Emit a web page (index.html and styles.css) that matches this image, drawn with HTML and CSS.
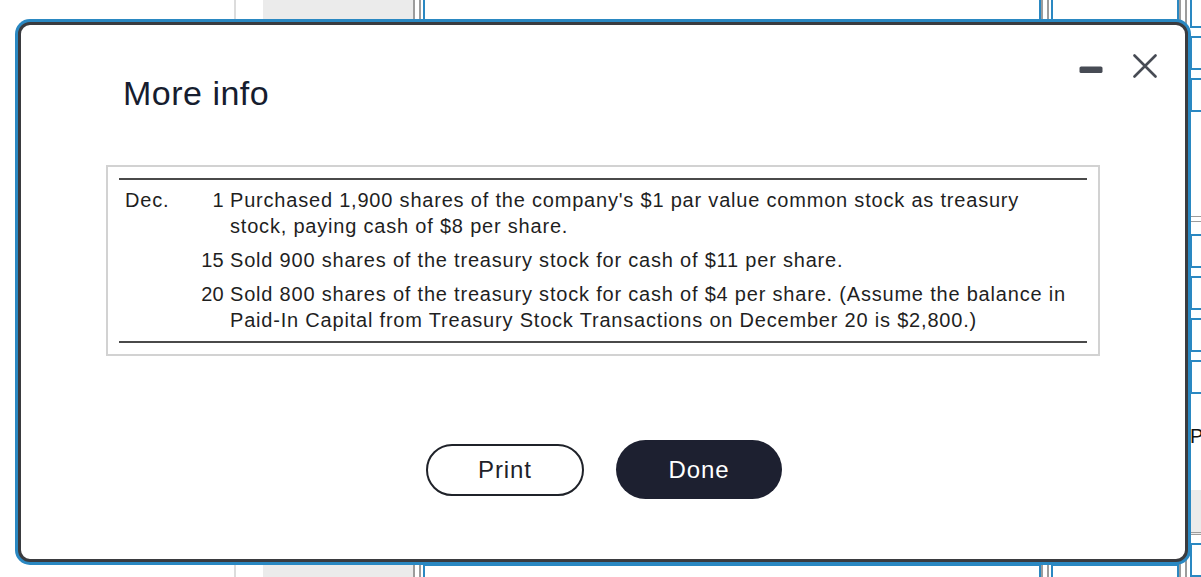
FILE: index.html
```html
<!DOCTYPE html>
<html lang="en">
<head>
<meta charset="utf-8">
<title>More info</title>
<link rel="stylesheet" href="styles.css">
</head>
<body>
<div class="page">
  <div class="col col-a"></div>
  <div class="col col-b"></div>
  <div class="col col-c"></div>
  <div class="col sep"></div>
  <div class="col panel panel-wide"><div class="panel-low"></div></div>
  <div class="col sep"></div>
  <div class="col panel panel-mid"><div class="panel-low"></div></div>
  <div class="col sep"></div>
  <div class="col side">
    <div class="side-box side-box-top"></div>
    <div class="side-box"></div>
    <div class="side-box"></div>
    <div class="side-rule"></div>
    <div class="side-box"></div>
    <div class="side-box"></div>
    <div class="side-box"></div>
    <div class="side-box"></div>
    <div class="side-letter">P</div>
    <div class="side-band"></div>
    <div class="side-box"></div>
  </div>
</div>

<div class="dialog" role="dialog" aria-label="More info">
  <div class="dialog-header">
    <h1 class="dialog-title">More info</h1>
    <div class="dialog-controls">
      <svg class="icon" width="24" height="24" viewBox="0 0 24 24" aria-hidden="true">
        <rect x="0.5" y="12.5" width="23" height="6.5" rx="1.6" fill="#474b54"/>
      </svg>
      <svg class="icon" width="24" height="24" viewBox="0 0 24 24" aria-hidden="true">
        <path d="M1.5 1.5 L22.5 22.5 M22.5 1.5 L1.5 22.5" stroke="#474b54" stroke-width="2.6" stroke-linecap="round" fill="none"/>
      </svg>
    </div>
  </div>

  <div class="info-box">
    <div class="info-table">
      <div class="cell month">Dec.</div>
      <div class="cell day">1</div>
      <div class="cell desc">Purchased 1,900 shares of the company's $1 par value common stock as treasury stock, paying cash of $8 per share.</div>

      <div class="cell month"></div>
      <div class="cell day">15</div>
      <div class="cell desc">Sold 900 shares of the treasury stock for cash of $11 per share.</div>

      <div class="cell month"></div>
      <div class="cell day">20</div>
      <div class="cell desc">Sold 800 shares of the treasury stock for cash of $4 per share. (Assume the balance in Paid-In Capital from Treasury Stock Transactions on December 20 is $2,800.)</div>
    </div>
  </div>

  <div class="dialog-actions">
    <button class="btn btn-outline" type="button">Print</button>
    <button class="btn btn-solid" type="button">Done</button>
  </div>
</div>
</body>
</html>
```

FILE: styles.css
```css
html, body {
  margin: 0;
  padding: 0;
}

body {
  width: 1201px;
  height: 577px;
  overflow: hidden;
  background: #ffffff;
  font-family: "Liberation Sans", Arial, sans-serif;
  position: relative;
}

/* ---------- background page ---------- */
.page {
  display: flex;
  height: 577px;
}

.col {
  flex: none;
  height: 100%;
  box-sizing: border-box;
}

.col-a {
  width: 236px;
  border-right: 2px solid #dcdcdc;
}

.col-b {
  width: 27px;
}

.col-c {
  width: 150px;
  background: #ebebeb;
}

.sep {
  width: 8px;
  border-left: 2px solid #9c9c9c;
  border-right: 2px solid #9c9c9c;
  margin-right: 2px;
}

.panel {
  border-left: 2px solid #2a88c2;
  border-right: 2px solid #2a88c2;
  display: flex;
  flex-direction: column;
  justify-content: flex-end;
}

.panel-wide {
  width: 618px;
}

.panel-mid {
  width: 128px;
}

.panel-low {
  height: 11px;
  border-top: 2px solid #2a88c2;
}

.side {
  width: 20px;
  display: flex;
  flex-direction: column;
  gap: 8px;
  padding-left: 1px;
}

.side-box {
  flex: none;
  height: 34px;
  border: 2px solid #2a88c2;
  box-sizing: border-box;
}

.side-box-top {
  margin-top: -6px;
}

.side-rule {
  height: 4px;
  border-top: 1px solid #9c9c9c;
  border-bottom: 1px solid #9c9c9c;
  margin: 96px 0 4px;
}

.side-letter {
  font-size: 20px;
  line-height: 20px;
  color: #111;
  margin-top: 24px;
}

.side-band {
  height: 44px;
  background: #ebebeb;
  border-bottom: 3px double #9c9c9c;
  margin-top: 36px;
}

/* ---------- dialog (modal overlay) ---------- */
.dialog {
  position: absolute;
  left: 18px;
  top: 22px;
  width: 1170px;
  height: 540px;
  box-sizing: border-box;
  background: #ffffff;
  border: 3px solid #3a3b3f;
  border-radius: 12px;
  box-shadow: 0 0 0 3px #2a88c2;
  display: flex;
  flex-direction: column;
}

.dialog-header {
  display: flex;
  justify-content: space-between;
  align-items: flex-start;
  padding: 0 28px 0 102px;
}

.dialog-title {
  margin: 49px 0 0;
  font-size: 34px;
  line-height: 38px;
  font-weight: normal;
  color: #161d2f;
  letter-spacing: 0.5px;
}

.dialog-controls {
  margin-top: 29px;
  display: flex;
  gap: 30px;
}

.icon {
  display: block;
}

/* ---------- info table ---------- */
.info-box {
  margin: 53px 85px 0;
  border: 2px solid #d2d2d2;
  padding: 11px 11px 11px;
}

.info-table {
  border-top: 2px solid #4a4a4a;
  border-bottom: 2px solid #4a4a4a;
  padding: 7px 11px 8px 6px;
  display: grid;
  grid-template-columns: 68px 25px 1fr;
  column-gap: 6px;
  row-gap: 8px;
  font-size: 20px;
  letter-spacing: 0.8px;
  line-height: 26px;
  color: #1f1f1f;
}

.day {
  text-align: right;
  letter-spacing: 0.3px;
}

/* ---------- actions ---------- */
.dialog-actions {
  margin-top: 84px;
  display: flex;
  justify-content: center;
  align-items: center;
  gap: 32px;
  padding-left: 2px;
}

.btn {
  font-family: "Liberation Sans", Arial, sans-serif;
  font-size: 24px;
  letter-spacing: 0.9px;
  box-sizing: border-box;
  cursor: pointer;
  padding: 0;
}

.btn-outline {
  width: 158px;
  height: 52px;
  border: 2px solid #1f2229;
  border-radius: 26px;
  background: #ffffff;
  color: #1f2229;
}

.btn-solid {
  width: 166px;
  height: 59px;
  border: none;
  border-radius: 30px;
  background: #1d2030;
  color: #ffffff;
}
```
